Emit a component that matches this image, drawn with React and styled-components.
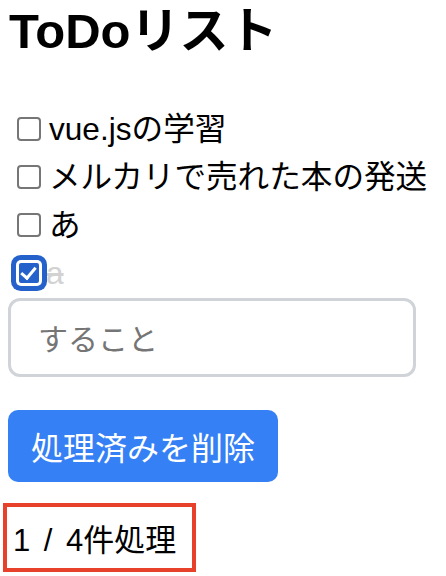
import React, { useState } from "react";
import styled, { createGlobalStyle } from "styled-components";

const Global = createGlobalStyle`
  html, body { margin: 0; padding: 0; background: #fff; }
  body {
    font-family: "Liberation Sans", "Noto Sans CJK JP", sans-serif;
    color: #000;
  }
`;

const Page = styled.div`
  padding: 0 8px;
  display: flex;
  flex-direction: column;
  align-items: flex-start;
`;

const Title = styled.h1`
  margin: 0;
  padding: 1px 0 0 1px;
  font-size: 49px;
  line-height: 61px;
  font-weight: 700;
`;

const List = styled.ul`
  list-style: none;
  margin: 43px 0 0;
  padding: 0 0 0 9px;
  display: flex;
  flex-direction: column;
`;

const Row = styled.li`
  height: 48px;
  display: flex;
  align-items: center;
  gap: ${(p) => (p.$done ? "5px" : "8px")};
`;

const Check = styled.input.attrs({ type: "checkbox" })`
  appearance: none;
  margin: 0;
  width: 24px;
  height: 24px;
  box-sizing: border-box;
  border: 2px solid #767676;
  border-radius: 4px;
  background: #fff;
  flex: none;
  position: relative;
  &:checked {
    background: #2561cb;
    border-color: #fff;
    box-shadow: 0 0 0 1px #fff, 0 0 0 6px #2561cb;
  }
  &:checked::after {
    content: "";
    position: absolute;
    left: 5px;
    top: 1px;
    width: 6px;
    height: 12px;
    border: solid #fff;
    border-width: 0 3px 3px 0;
    transform: rotate(40deg);
  }
`;

const Label = styled.span`
  font-size: 31.6px;
  line-height: 48px;
  color: ${(p) => (p.$done ? "#d2d2d2" : "#000")};
  text-decoration: ${(p) => (p.$done ? "line-through" : "none")};
  white-space: nowrap;
`;

const Field = styled.input`
  margin-top: 1px;
  width: 408px;
  height: 79px;
  box-sizing: border-box;
  border: 3px solid #d0d4d8;
  border-radius: 12px;
  padding: 4px 0 0 27px;
  font-family: inherit;
  font-size: 30px;
  outline: none;
  &::placeholder { color: #757575; }
`;

const Button = styled.button`
  margin-top: 33px;
  height: 72px;
  padding: 0 23px;
  border: none;
  border-radius: 10px;
  background: #3580f5;
  color: #fff;
  font-family: inherit;
  font-size: 32px;
`;

const Counter = styled.div`
  margin: 21px 0 0 -5px;
  height: 69px;
  box-sizing: border-box;
  border: 4px solid #e8412b;
  padding: 0 16px 0 6px;
  display: flex;
  align-items: center;
  font-size: 31px;
  word-spacing: 5px;
`;

const initial = [
  { text: "vue.jsの学習", done: false },
  { text: "メルカリで売れた本の発送", done: false },
  { text: "あ", done: false },
  { text: "a", done: true },
];

export default function App() {
  const [todos, setTodos] = useState(initial);
  const toggle = (i) =>
    setTodos((t) => t.map((x, j) => (j === i ? { ...x, done: !x.done } : x)));
  const doneCount = todos.filter((t) => t.done).length;
  return (
    <Page>
      <Global />
      <Title>ToDoリスト</Title>
      <List>
        {todos.map((t, i) => (
          <Row key={i} $done={t.done}>
            <Check checked={t.done} onChange={() => toggle(i)} />
            <Label $done={t.done}>{t.text}</Label>
          </Row>
        ))}
      </List>
      <Field placeholder="すること" />
      <Button>処理済みを削除</Button>
      <Counter>
        {doneCount} / {todos.length}件処理
      </Counter>
    </Page>
  );
}
